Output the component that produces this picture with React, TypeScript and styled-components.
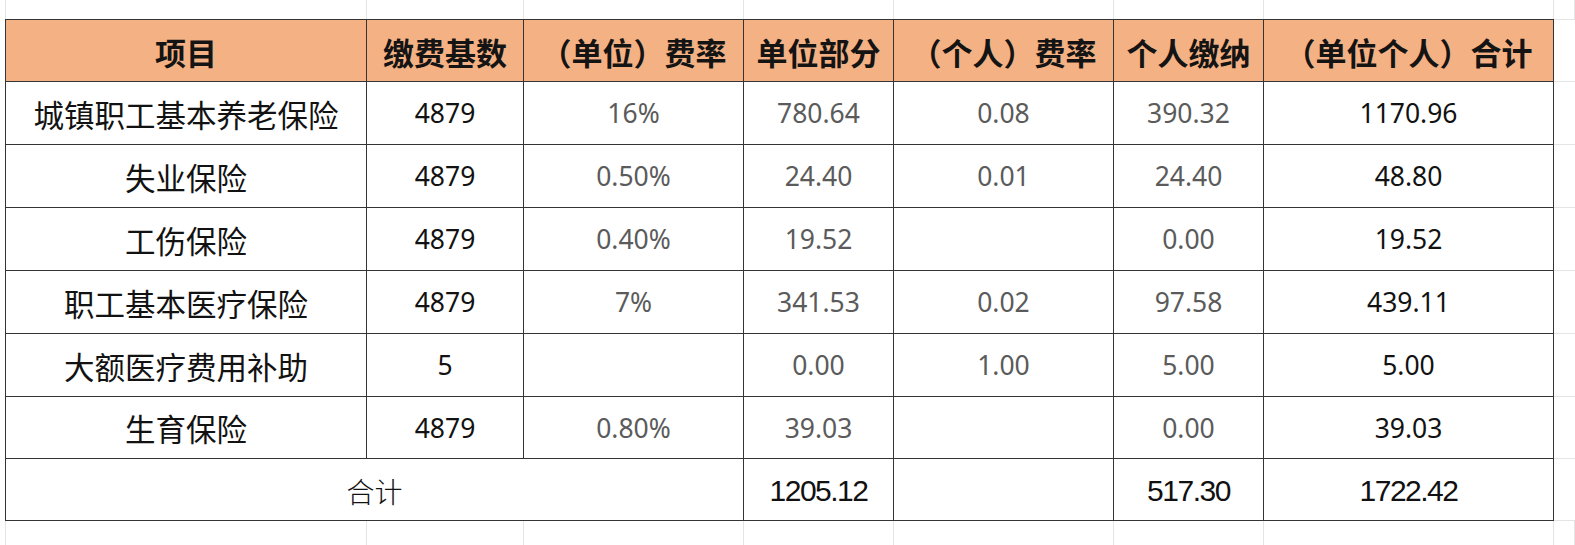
import React from "react";
import styled, { createGlobalStyle, css } from "styled-components";

const GlobalStyle = createGlobalStyle`
  html, body {
    margin: 0;
    padding: 0;
    background: #ffffff;
  }
  body {
    font-family: "Noto Sans CJK SC", "Noto Sans", sans-serif;
  }
`;

const COLS = "6px 361px 157px 220px 150px 220px 150px 290px 1fr";
const ROWS = "61px 62px 62px 62px 62px 62px 61px 61px";
const GRID = "#e4e4e4";
const LINE = "#343434";

const Sheet = styled.div`
  width: 1575px;
  height: 545px;
  display: flex;
  flex-direction: column;
  overflow: hidden;
  background: #fff;
`;

const GhostRow = styled.div<{ $h?: number }>`
  display: grid;
  grid-template-columns: ${COLS};
  ${(p) => (p.$h ? `height: ${p.$h}px;` : "flex: 1;")}
`;

const GhostCell = styled.div`
  box-sizing: border-box;
  border-right: 1px solid ${GRID};
`;

const Middle = styled.div`
  display: flex;
`;

const LeftGutter = styled.div`
  width: 5px;
  flex: none;
`;

const RightGutter = styled.div`
  flex: 1;
  display: grid;
  grid-template-rows: ${ROWS};
  row-gap: 1px;
  padding: 1px 0;
  background: ${GRID};
`;

const GutterCell = styled.div`
  background: #fff;
`;

const Table = styled.div`
  flex: none;
  display: grid;
  grid-template-columns: 360px 156px 219px 149px 219px 149px 289px;
  grid-template-rows: ${ROWS};
  gap: 1px;
  padding: 1px;
  background: ${LINE};
`;

type Tone = "dark" | "muted";

const Cell = styled.div<{ $tone?: Tone; $num?: boolean; $span?: number }>`
  background: #ffffff;
  display: flex;
  align-items: center;
  justify-content: center;
  white-space: nowrap;
  color: ${(p) => (p.$tone === "muted" ? "#5b5b5b" : "#121212")};
  ${(p) =>
    p.$num
      ? css`
          font-family: "Noto Sans", "Open Sans", sans-serif;
          font-size: 26.5px;
          padding-top: 0;
        `
      : css`
          font-family: "Noto Sans CJK SC", sans-serif;
          font-size: 30.5px;
          padding-top: 1px;
        `}
  ${(p) => (p.$span ? `grid-column: span ${p.$span};` : "")}
`;

const HeaderCell = styled.div`
  background: #f4b183;
  display: flex;
  align-items: center;
  justify-content: center;
  white-space: nowrap;
  font-family: "Noto Sans CJK SC", sans-serif;
  font-weight: 700;
  font-size: 31px;
  color: #141414;
  padding-top: 1px;
`;

const TotalLabel = styled(Cell)`
  font-weight: 300;
  font-size: 28px;
  padding-top: 2px;
`;

const TotalNum = styled(Cell)`
  font-family: "Liberation Sans", Arial, sans-serif;
  font-size: 30px;
  letter-spacing: -1.5px;
  color: #111;
  padding-top: 2px;
`;

const headers = [
  "项目",
  "缴费基数",
  "（单位）费率",
  "单位部分",
  "（个人）费率",
  "个人缴纳",
  "（单位个人）合计",
];

type Row = [string, string, string, string, string, string, string];

const rows: Row[] = [
  ["城镇职工基本养老保险", "4879", "16%", "780.64", "0.08", "390.32", "1170.96"],
  ["失业保险", "4879", "0.50%", "24.40", "0.01", "24.40", "48.80"],
  ["工伤保险", "4879", "0.40%", "19.52", "", "0.00", "19.52"],
  ["职工基本医疗保险", "4879", "7%", "341.53", "0.02", "97.58", "439.11"],
  ["大额医疗费用补助", "5", "", "0.00", "1.00", "5.00", "5.00"],
  ["生育保险", "4879", "0.80%", "39.03", "", "0.00", "39.03"],
];

const toneFor = (i: number): Tone => (i >= 2 && i <= 5 ? "muted" : "dark");

const Ghost = ({ h }: { h?: number }) => (
  <GhostRow $h={h}>
    {Array.from({ length: 9 }).map((_, i) => (
      <GhostCell key={i} />
    ))}
  </GhostRow>
);

export default function App() {
  return (
    <>
      <GlobalStyle />
      <Sheet>
        <Ghost h={19} />
        <Middle>
          <LeftGutter />
          <Table>
            {headers.map((h) => (
              <HeaderCell key={h}>{h}</HeaderCell>
            ))}
            {rows.map((r) =>
              r.map((v, i) => (
                <Cell key={r[0] + i} $tone={toneFor(i)} $num={i > 0}>
                  {v}
                </Cell>
              ))
            )}
            <TotalLabel $span={3}>合计</TotalLabel>
            <TotalNum $num>1205.12</TotalNum>
            <Cell />
            <TotalNum $num>517.30</TotalNum>
            <TotalNum $num>1722.42</TotalNum>
          </Table>
          <RightGutter>
            {Array.from({ length: 8 }).map((_, i) => (
              <GutterCell key={i} />
            ))}
          </RightGutter>
        </Middle>
        <Ghost />
      </Sheet>
    </>
  );
}
